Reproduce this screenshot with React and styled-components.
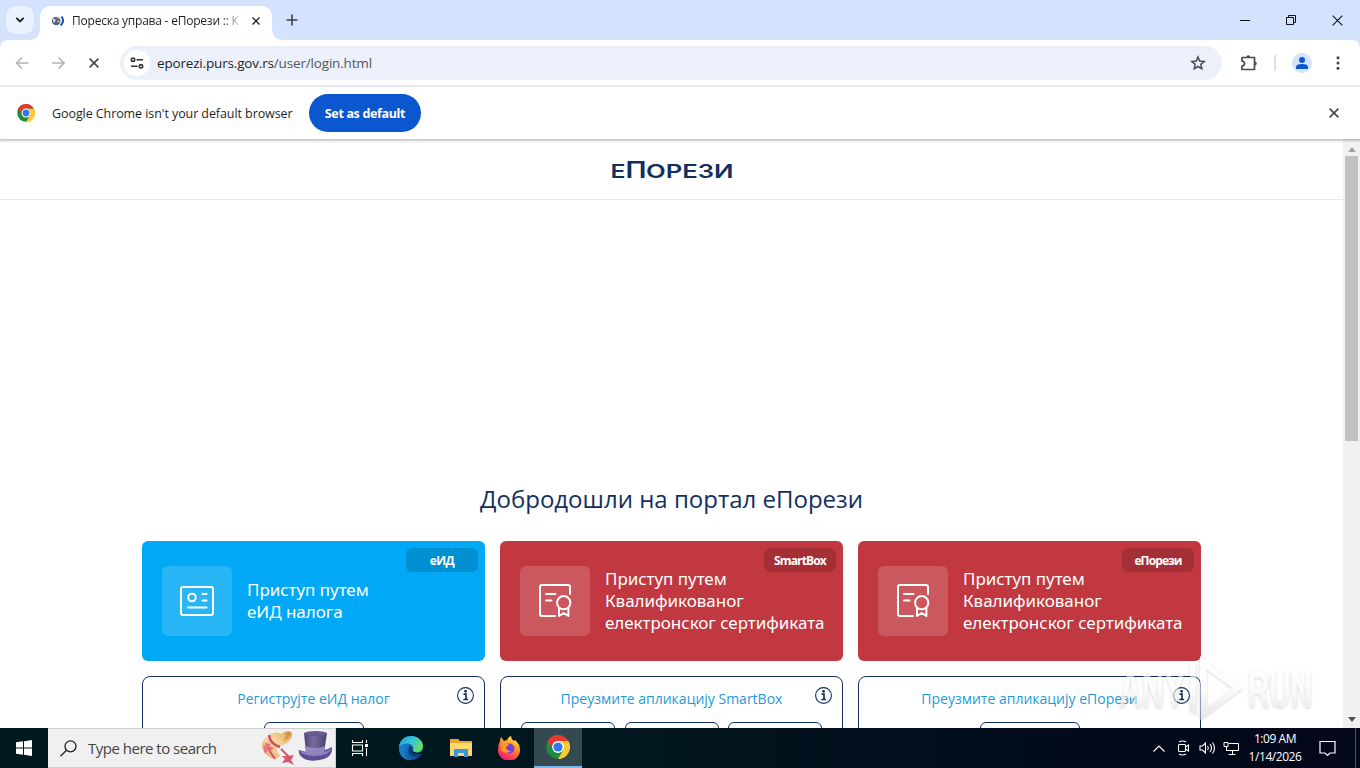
import React from "react";
import styled, { createGlobalStyle } from "styled-components";

const navy = "#12305f";

const GlobalStyle = createGlobalStyle`
  *, *::before, *::after { box-sizing: border-box; }
  html, body { margin: 0; padding: 0; overflow: hidden; }
  body { font-family: "Open Sans", "Noto Sans", sans-serif; color: #1f1f1f; }
  svg { display: block; flex: none; }
`;

const Screen = styled.div`
  position: relative;
  width: 1360px;
  height: 768px;
  display: flex;
  flex-direction: column;
  overflow: hidden;
  background: #fff;
`;

/* ---------- browser chrome ---------- */

const TabStrip = styled.div`
  display: flex;
  height: 40px;
  padding-left: 6px;
  background: #d3e3fd;
`;

const TabSearch = styled.div`
  width: 28px;
  height: 28px;
  margin: 6px 6px 0 0;
  border-radius: 10px;
  background: #e9f1fe;
  display: grid;
  place-items: center;
`;

const Tab = styled.div`
  position: relative;
  width: 232px;
  height: 34px;
  margin-top: 6px;
  padding: 0 10px 5px 11px;
  display: flex;
  align-items: center;
  background: #fff;
  border-radius: 10px 10px 0 0;
  &::before, &::after {
    content: "";
    position: absolute;
    bottom: 0;
    width: 10px;
    height: 10px;
  }
  &::before { left: -10px; background: radial-gradient(circle at 0 0, transparent 9.5px, #fff 10px); }
  &::after { right: -10px; background: radial-gradient(circle at 100% 0, transparent 9.5px, #fff 10px); }
`;

const TabTitle = styled.span`
  flex: none;
  width: 168px;
  margin-left: 7px;
  margin-right: 12px;
  white-space: nowrap;
  font-size: 12px;
  line-height: 18px;
  letter-spacing: -0.22px;
  mask-image: linear-gradient(to right, #000 150px, transparent 172px);
`;

const NewTab = styled.div`
  margin: 14px 0 0 14px;
`;

const WindowControls = styled.div`
  display: flex;
  margin-left: auto;
`;

const WindowButton = styled.div`
  width: 46px;
  height: 40px;
  display: grid;
  place-items: center;
`;

const ToolbarBack = styled.div`
  background: #d3e3fd;
`;

const Toolbar = styled.div`
  display: flex;
  align-items: center;
  height: 46px;
  padding: 0 13px;
  background: #fff;
  border-radius: 8px 8px 0 0;
`;

const ToolButton = styled.div`
  flex: none;
  width: 18px;
  display: flex;
  justify-content: center;
  margin-left: ${(p) => p.$before || 0}px;
  margin-right: ${(p) => p.$after || 0}px;
`;

const AddressBar = styled.div`
  flex: none;
  display: flex;
  align-items: center;
  width: 1102px;
  height: 34px;
  padding: 0 16px 0 4px;
  border-radius: 17px;
  background: #ecf0fa;
`;

const SiteInfo = styled.div`
  width: 26px;
  height: 26px;
  border-radius: 50%;
  background: #fff;
  display: grid;
  place-items: center;
`;

const Url = styled.span`
  flex: 1;
  margin-left: 7px;
  font-size: 13.5px;
  line-height: 20px;
  letter-spacing: -0.17px;
  color: #1f1f1f;
  em { font-style: normal; color: #53565b; }
`;

const Divider = styled.div`
  width: 2px;
  height: 16px;
  background: #dbe2ee;
`;

const Avatar = styled.div`
  flex: none;
  width: 20px;
  height: 20px;
  margin: 0 24px 0 16px;
  border-radius: 50%;
  background: #d3e3fd;
  display: grid;
  place-items: center;
`;

const InfoBar = styled.div`
  position: relative;
  z-index: 1;
  display: flex;
  align-items: center;
  height: 53px;
  padding: 0 21px 0 17px;
  border-top: 1px solid #e1e5ea;
  background: #fff;
  box-shadow: 0 1px 2px 1px rgba(0, 0, 0, 0.22);
`;

const InfoText = styled.span`
  width: 257px;
  margin-left: 17px;
  white-space: nowrap;
  font-size: 12.5px;
  letter-spacing: -0.08px;
`;

const DefaultButton = styled.div`
  width: 112px;
  height: 38px;
  margin-right: auto;
  border-radius: 19px;
  background: #0b57d0;
  color: #fff;
  font-size: 12.5px;
  font-weight: 700;
  line-height: 39px;
  text-align: center;
  white-space: nowrap;
  letter-spacing: -0.34px;
`;

/* ---------- page ---------- */

const Viewport = styled.div`
  display: flex;
  height: 589px;
`;

const Page = styled.main`
  flex: 1;
  display: flex;
  flex-direction: column;
  align-items: center;
  overflow: hidden;
`;

const SiteHeader = styled.header`
  flex: none;
  width: 100%;
  height: 61px;
  padding-top: 20px;
  display: flex;
  justify-content: center;
  border-bottom: 1px solid #e7e9eb;
`;

const Welcome = styled.h1`
  flex: none;
  margin: 281px 0 0;
  height: 60px;
  font-size: 24px;
  font-weight: 400;
  line-height: 36px;
  white-space: nowrap;
  color: ${navy};
`;

const CardGrid = styled.div`
  flex: none;
  display: grid;
  grid-template-columns: repeat(3, 343px);
  gap: 15px;
`;

const LoginCard = styled.div`
  position: relative;
  display: flex;
  align-items: center;
  height: 120px;
  padding-left: 20px;
  border-radius: 6px;
  background: ${(p) => p.$color};
  color: #fff;
`;

const IconTile = styled.div`
  width: 70px;
  height: 70px;
  border-radius: 6px;
  background: rgba(255, 255, 255, 0.16);
  display: grid;
  place-items: center;
`;

const CardText = styled.div`
  margin-left: 15px;
  font-family: "Noto Sans", sans-serif;
  font-size: 17px;
  line-height: 22px;
  white-space: pre;
  letter-spacing: -0.03px;
`;

const CardBadge = styled.div`
  position: absolute;
  top: 7px;
  right: 7px;
  width: 72px;
  height: 24px;
  border-radius: 6px;
  background: rgba(0, 0, 0, 0.15);
  font-size: 12px;
  font-weight: 700;
  line-height: 25px;
  text-align: center;
  white-space: nowrap;
  letter-spacing: ${(p) => p.$spacing};
`;

const ActionCard = styled.div`
  position: relative;
  height: 90px;
  border: 1px solid ${navy};
  border-radius: 8px;
`;

const ActionTitle = styled.div`
  margin-top: 12px;
  height: 33px;
  text-align: center;
  font-size: 14px;
  line-height: 20px;
  white-space: nowrap;
  color: #1d9bd8;
`;

const ActionButtons = styled.div`
  display: flex;
  justify-content: center;
  gap: 9.5px;
`;

const ActionButton = styled.div`
  width: ${(p) => p.$width}px;
  height: 36px;
  border: 1px solid ${navy};
  border-radius: 6px;
`;

const InfoBadge = styled.div`
  position: absolute;
  top: 10px;
  right: 10px;
`;

const Scrollbar = styled.div`
  width: 17px;
  display: flex;
  flex-direction: column;
  align-items: center;
  justify-content: space-between;
  padding: 8px 0 6px;
  background: #f1f1f1;
`;

const Thumb = styled.div`
  width: 13px;
  height: 285px;
  margin: 4px 0 auto;
  background: #c1c1c1;
`;

const Watermark = styled.div`
  position: absolute;
  left: 1114px;
  top: 650px;
`;

/* ---------- taskbar ---------- */

const Taskbar = styled.footer`
  display: flex;
  height: 40px;
  background: linear-gradient(to right, #011a21, #01171f 45%, #020a1a 80%, #020819);
  color: #fff;
`;

const TaskItem = styled.div`
  width: ${(p) => p.$width}px;
  display: grid;
  place-items: center;
  background: ${(p) => (p.$active ? "#344950" : "transparent")};
  border-bottom: ${(p) => (p.$active ? "2px solid #76b9ed" : "0")};
`;

const SearchBox = styled.div`
  width: 288px;
  display: flex;
  align-items: center;
  padding: 0 3px 0 12px;
  border: 1px solid #cfcfcf;
  border-left: 0;
  background: #f0f0f0;
  color: #454545;
`;

const SearchText = styled.span`
  flex: 1;
  margin-left: 11px;
  font-size: 15px;
  white-space: nowrap;
  letter-spacing: -0.5px;
`;

const Tray = styled.div`
  display: flex;
  align-items: center;
  margin-left: auto;
`;

const TrayIcon = styled.div`
  width: 24px;
  display: grid;
  place-items: center;
`;

const Clock = styled.div`
  width: 64px;
  text-align: center;
  font-size: 12px;
  line-height: 18px;
  white-space: nowrap;
  letter-spacing: -0.45px;
`;

const Notifications = styled.div`
  width: 40px;
  display: grid;
  place-items: center;
`;

const ShowDesktop = styled.div`
  width: 5px;
  height: 40px;
  margin-left: 8px;
  border-left: 1px solid #4d5461;
`;

/* ---------- drawings ---------- */

const Cross = ({ size = 10, width = 1.6, color = "#3f4246" }) => (
  <svg width={size} height={size} viewBox="0 0 10 10" stroke={color} strokeWidth={width} fill="none">
    <path d="M.6.6 9.4 9.4M9.4.6.6 9.4" />
  </svg>
);

const Arrow = ({ flip }) => (
  <svg width="14" height="14" viewBox="0 0 14 14" fill="none" stroke="#b2b4b8" strokeWidth="1.6">
    <path d={flip ? "M1 7h11.5M7.5 1.5 13 7l-5.5 5.5" : "M13.5 7H2M7 1.5 1.5 7 7 12.5"} />
  </svg>
);

const Favicon = () => (
  <svg width="14" height="14" viewBox="0 0 14 14">
    <circle cx="5.200" cy="7" r="4.300" fill="#5b6470" />
    <path d="M2 5q3-1 2.500 1.500T2.500 8.500M5 3.500q2 1.500 3.500.5M6.500 6.500q2 0 2 2l-2-.5z" fill="#dce5eb" />
    <path d="M10.500 2.500q3.500 4.500-.8 9" fill="none" stroke="#1549b8" strokeWidth="2" />
  </svg>
);

const ChromeLogo = ({ size }) => (
  <svg width={size} height={size} viewBox="0 0 48 48">
    <circle cx="24" cy="24" r="23.5" fill="#1e8e3e" />
    <path d="M24 12h20.8A24 24 0 0 1 24 48l10.4-18z" fill="#fcc934" />
    <path d="M3.2 12 13.6 30A12 12 0 0 1 24 12h20.8A24 24 0 0 0 3.2 12z" fill="#e33b2e" />
    <circle cx="24" cy="24" r="11.8" fill="#fff" />
    <circle cx="24" cy="24" r="9.2" fill="#3179ed" />
  </svg>
);

const TuneIcon = () => (
  <svg width="14" height="12" viewBox="0 0 14 12" fill="none" stroke="#303235" strokeWidth="1.6">
    <circle cx="3" cy="2.7" r="1.7" />
    <path d="M6.5 2.7H13M1 9.3h6.5" />
    <circle cx="11" cy="9.3" r="1.7" />
  </svg>
);

const StarIcon = () => (
  <svg width="16" height="16" viewBox="0 0 16 16" fill="none" stroke="#474a4f" strokeWidth="1.5">
    <path d="m8 2 1.700 4.100 4.500.4-3.400 2.900 1 4.400L8 11.500l-3.800 2.300 1-4.400-3.400-2.900 4.500-.4z" />
  </svg>
);

const PuzzleIcon = () => (
  <svg width="18" height="18" viewBox="0 0 18 18" fill="none" stroke="#474a4f" strokeWidth="1.7" strokeLinejoin="round">
    <path d="M2 3.500h12.500v12H2V12q2.600-.3 2.600-2.400T2 7z" />
    <path d="M6.500 3a1.800 1.800 0 0 1 3.600 0zM15 7.700a1.800 1.800 0 0 1 0 3.600z" fill="#474a4f" stroke="none" />
  </svg>
);

const PersonIcon = () => (
  <svg width="14" height="14" viewBox="0 0 14 14" fill="#0b57d0">
    <circle cx="7" cy="4" r="3" />
    <path d="M1 13v-2q0-3 6-3t6 3v2z" />
  </svg>
);

const Logo = () => (
  <svg width="124" height="30" viewBox="0 0 124 30" overflow="visible" fill={navy} fontFamily="Inter, sans-serif" fontWeight="600">
    <text x="0.5" y="18.5" fontSize="19" textLength="15" lengthAdjust="spacingAndGlyphs">Е</text>
    <text x="15.5" y="18.5" fontSize="23" textLength="21" lengthAdjust="spacingAndGlyphs">П</text>
    <text x="36" y="18.5" fontSize="19" textLength="87.5" lengthAdjust="spacingAndGlyphs">ОРЕЗИ</text>
  </svg>
);

const IdIcon = () => (
  <svg width="36" height="32" viewBox="0 0 36 32" fill="none" stroke="#fff" strokeWidth="2" strokeLinecap="round">
    <rect x="2" y="2" width="32" height="28" rx="2" />
    <circle cx="13" cy="12.500" r="3.800" />
    <path d="M23.500 9h4M23.500 15.500h4M9 22.500h18.500" />
  </svg>
);

const CertificateIcon = () => (
  <svg width="34" height="34" viewBox="0 0 34 34" fill="none" stroke="#fff" strokeWidth="2" strokeLinecap="round" strokeLinejoin="round">
    <path d="M17 32H4q-2 0-2-2V3q0-2 2-2h26q2 0 2 2v7" />
    <path d="M8 10h9.500M8 16.500h5.500" />
    <circle cx="25.700" cy="18.700" r="6.600" />
    <path d="M21 24v8l4.700-3 4.700 3V24" />
  </svg>
);

const InfoIcon = () => (
  <svg width="17" height="17" viewBox="0 0 17 17" fill="none" stroke={navy}>
    <circle cx="8.500" cy="8.500" r="7.900" strokeWidth="1.100" />
    <path d="M6.500 7.200h2.500v5M6.300 12.500h4.700" strokeWidth="1.700" />
    <circle cx="8.600" cy="4.300" r="1.400" fill={navy} stroke="none" />
  </svg>
);

const HatsArt = () => (
  <svg width="71" height="36" viewBox="0 0 71 36">
    <defs>
      <linearGradient id="straw" x1="0" y1="1" x2="1" y2="0">
        <stop stopColor="#e0a662" />
        <stop offset=".5" stopColor="#f8d9a0" />
        <stop offset="1" stopColor="#e0a558" />
      </linearGradient>
      <linearGradient id="felt" x1="0" x2="1">
        <stop stopColor="#4d4272" />
        <stop offset=".4" stopColor="#796ba3" />
        <stop offset="1" stopColor="#4a3f70" />
      </linearGradient>
    </defs>
    <path d="M9 4.500Q14 1 20 4q5-4 10-2 3 3-1 8-5 6-12 6-3 4 2 9-1 5-9 3Q0 22 1 14 3 7 9 4.500z" fill="url(#straw)" />
    <path d="M24 3q5-3 6 0-1 6-8 8 4-4 2-8z" fill="#c98941" opacity=".7" />
    <path d="M8 5q1 9 11 12" stroke="#c9506a" strokeWidth="2.500" fill="none" />
    <path d="M6 17 14 29M20 19l8 8" stroke="#dc526b" strokeWidth="2" />
    <path d="m2 15 6 3-4 6zM10 14l-6-1 1 7zM8 16l5 2-5 4z" fill="#e56f80" />
    <path d="m27 26 6-1-3 5 3 5-6-3-6 1 3-4-3-3z" fill="#d9546d" />
    <path d="M38 20q16 6 33-3 1 9-8 12-14 4-21-1-5-3-4-8z" fill="#5d4e96" />
    <path d="M38 20q17 9 33-2-4 8-17 8-12 0-16-6z" fill="#8f81c4" />
    <path d="m43 3 2 20q9 4 18 0l3-20z" fill="url(#felt)" />
    <path d="m44.500 16 .5 7q9 4 18 0l1-7q-10 4-19.500 0z" fill="#9386bf" />
    <ellipse cx="54.500" cy="3.500" rx="11.500" ry="2.500" fill="#665990" />
  </svg>
);

const EdgeLogo = () => (
  <svg width="26" height="26" viewBox="0 0 26 26">
    <defs>
      <linearGradient id="edgeTop" x1="0" y1="0" x2="1" y2=".5">
        <stop stopColor="#219bd9" />
        <stop offset=".55" stopColor="#36c5d3" />
        <stop offset="1" stopColor="#65dd62" />
      </linearGradient>
      <linearGradient id="edgeBody" x1="0" y1="0" x2="1" y2="1">
        <stop stopColor="#1785d7" />
        <stop offset="1" stopColor="#124b96" />
      </linearGradient>
    </defs>
    <circle cx="13" cy="13" r="12" fill="url(#edgeBody)" />
    <path d="M1 12C2 4 8 1 13 1c7 0 12 5 12 10 0 4-3 6.500-7 6.500-3 0-4-1-3-3 2-5-7-9-14-2.500z" fill="url(#edgeTop)" />
    <path d="M12 11c-4 4-1 11 6 11 3 0 5-1.500 6-3.500-4 1.500-11 1-9.500-4 .6-2-1-4-2.500-3.500z" fill="#0d3f80" />
    <path d="M14.500 14.500c-1 3 1 4.500 5 4.500h5.500v-3q-2 2-6 1.700-4-.2-4.500-3.200z" fill="#031820" />
    <path d="M8 12c-4 6 0 13 6 13-8 1-13-5-13-12 2-4 6-4 9-3z" fill="#197ec9" />
  </svg>
);

const FolderLogo = () => (
  <svg width="24" height="20" viewBox="0 0 24 20">
    <path d="M1 1h8l2 2h12v15H1z" fill="#e8a92d" />
    <path d="M1 5h22v13H1z" fill="#ffd86d" />
    <path d="M5 19v-7q0-1 1-1h12q1 0 1 1v7h-4v-4H9v4z" fill="#399ad7" />
  </svg>
);

const FirefoxLogo = () => (
  <svg width="24" height="24" viewBox="0 0 24 24">
    <defs>
      <linearGradient id="fox" x1=".8" y1="0" x2=".3" y2="1">
        <stop stopColor="#fff044" />
        <stop offset=".4" stopColor="#ff9728" />
        <stop offset=".75" stopColor="#ff4055" />
        <stop offset="1" stopColor="#e31587" />
      </linearGradient>
    </defs>
    <path d="M3 5q0-2 1-4l3 4 3-1q1-3 4-4 0 3 3 5l1-1q5 4 5 10a11 11 0 0 1-22 0q0-5 2-9z" fill="url(#fox)" />
    <circle cx="12.500" cy="12.500" r="5" fill="#7543d3" />
    <path d="M5 7q5-1 7 2l-3 2q0 4 5 4-6 4-10-1z" fill="#ff9a25" />
  </svg>
);

const TaskViewIcon = () => (
  <svg width="18" height="16" viewBox="0 0 18 16" fill="none" stroke="#fff" strokeWidth="1.100">
    <path d="M1.500 0v2.500h10V0M1.500 16v-2.500h10V16M1.500 5h10v6h-10zM15.500 0v3M15.500 8v8" />
    <path d="M14 4h3v3h-3z" fill="#fff" stroke="none" />
  </svg>
);

const WatermarkArt = () => (
  <svg width="210" height="78" viewBox="0 0 210 78" overflow="visible">
    <defs>
      <filter id="soft" x="-10%" y="-10%" width="120%" height="130%">
        <feDropShadow dx="0" dy="1" stdDeviation="1.800" floodColor="#000" floodOpacity=".32" />
      </filter>
      <linearGradient id="sheen" gradientUnits="userSpaceOnUse" x1="0" y1="8" x2="0" y2="70">
        <stop stopColor="#fff" />
        <stop offset=".5" stopColor="#fafafa" />
        <stop offset="1" stopColor="#d2d2d2" />
      </linearGradient>
    </defs>
    <g filter="url(#soft)" opacity=".58" fill="url(#sheen)" fontFamily="Liberation Sans, sans-serif" fontSize="50" fontWeight="700">
      <text x="5" y="57" textLength="66" lengthAdjust="spacingAndGlyphs">ANY</text>
      <text x="134" y="57" textLength="64" lengthAdjust="spacingAndGlyphs">RUN</text>
      <path d="M86 6v64l43-32zM92.500 19l26 19-26 20z" fillRule="evenodd" />
      <path d="M76 17q2-3 6-6v54q-4-3-6-6z" />
    </g>
  </svg>
);

const ACCESS = [
  { badge: "еИД", spacing: "-0.6px", color: "#00a8f6", text: "Приступ путем\nеИД налога", icon: <IdIcon /> },
  { badge: "SmartBox", spacing: "-0.85px", color: "#c13840", text: "Приступ путем\nКвалификованог\nелектронског сертификата", icon: <CertificateIcon /> },
  { badge: "еПорези", spacing: "-0.9px", color: "#c13840", text: "Приступ путем\nКвалификованог\nелектронског сертификата", icon: <CertificateIcon /> },
];

const ACTIONS = [
  { title: "Региструјте еИД налог", buttons: [100] },
  { title: "Преузмите апликацију SmartBox", buttons: [94, 94, 94] },
  { title: "Преузмите апликацију еПорези", buttons: [100] },
];

export default function App() {
  return (
    <Screen>
      <GlobalStyle />
      <TabStrip>
        <TabSearch>
          <svg width="10" height="6" viewBox="0 0 10 6" fill="none" stroke="#1f1f1f" strokeWidth="1.8"><path d="m1.300.8 3.700 3.700L8.700.8" /></svg>
        </TabSearch>
        <Tab>
          <Favicon />
          <TabTitle>Пореска управа - еПорези :: К</TabTitle>
          <Cross size={8} width={1.8} color="#27292c" />
        </Tab>
        <NewTab>
          <svg width="12" height="12" viewBox="0 0 12 12" stroke="#3f4246" strokeWidth="1.600"><path d="M6 .5v11M.5 6h11" /></svg>
        </NewTab>
        <WindowControls>
          <WindowButton><svg width="10" height="10" viewBox="0 0 10 10" stroke="#111"><path d="M0 5.500h10" /></svg></WindowButton>
          <WindowButton><svg width="10" height="10" viewBox="0 0 10 10" fill="none" stroke="#111"><path d="M.5 2.500h7v7h-7zM2.500 2.500v-2h7v7h-2" /></svg></WindowButton>
          <WindowButton><Cross size={11} width={1} color="#111" /></WindowButton>
        </WindowControls>
      </TabStrip>
      <ToolbarBack>
        <Toolbar>
          <ToolButton $after={18}><Arrow /></ToolButton>
          <ToolButton $after={18}><Arrow flip /></ToolButton>
          <ToolButton $after={17}><Cross size={10} width={1.5} /></ToolButton>
          <AddressBar>
            <SiteInfo><TuneIcon /></SiteInfo>
            <Url>eporezi.purs.gov.rs<em>/user/login.html</em></Url>
            <StarIcon />
          </AddressBar>
          <ToolButton $before={18} $after={16}><PuzzleIcon /></ToolButton>
          <Divider />
          <Avatar><PersonIcon /></Avatar>
          <svg width="4" height="14" viewBox="0 0 4 14" fill="#3f4246"><circle cx="2" cy="1.700" r="1.500" /><circle cx="2" cy="7" r="1.500" /><circle cx="2" cy="12.300" r="1.500" /></svg>
        </Toolbar>
      </ToolbarBack>
      <InfoBar>
        <ChromeLogo size={18} />
        <InfoText>Google Chrome isn't your default browser</InfoText>
        <DefaultButton>Set as default</DefaultButton>
        <Cross size={10} width={1.5} />
      </InfoBar>

      <Viewport>
        <Page>
          <SiteHeader><Logo /></SiteHeader>
          <Welcome>Добродошли на портал еПорези</Welcome>
          <CardGrid>
            {ACCESS.map((c) => (
              <LoginCard key={c.badge} $color={c.color}>
                <IconTile>{c.icon}</IconTile>
                <CardText>{c.text}</CardText>
                <CardBadge $spacing={c.spacing}>{c.badge}</CardBadge>
              </LoginCard>
            ))}
            {ACTIONS.map((a) => (
              <ActionCard key={a.title}>
                <ActionTitle>{a.title}</ActionTitle>
                <ActionButtons>
                  {a.buttons.map((w, i) => <ActionButton key={i} $width={w} />)}
                </ActionButtons>
                <InfoBadge><InfoIcon /></InfoBadge>
              </ActionCard>
            ))}
          </CardGrid>
        </Page>
        <Scrollbar>
          <svg width="8" height="5" viewBox="0 0 8 5" fill="#a3a3a3"><path d="M4 0 8 5H0z" /></svg>
          <Thumb />
          <svg width="8" height="5" viewBox="0 0 8 5" fill="#505050"><path d="M4 5 8 0H0z" /></svg>
        </Scrollbar>
      </Viewport>

      <Taskbar>
        <TaskItem $width={48}>
          <svg width="16" height="16" viewBox="0 0 16 16" fill="#fff"><path d="m0 2.300 7-1v6.200H0zM8 1.200 16 0v7.500H8zM0 8.500h7v6.200l-7-1zM8 8.500h8V16l-8-1.200z" /></svg>
        </TaskItem>
        <SearchBox>
          <svg width="17" height="17" viewBox="0 0 17 17" fill="none" stroke="#222" strokeWidth="1.300"><circle cx="10.500" cy="6.300" r="5.500" /><path d="m6.500 10.300-6 6" /></svg>
          <SearchText>Type here to search</SearchText>
          <HatsArt />
        </SearchBox>
        <TaskItem $width={48}><TaskViewIcon /></TaskItem>
        <TaskItem $width={54}><EdgeLogo /></TaskItem>
        <TaskItem $width={46}><FolderLogo /></TaskItem>
        <TaskItem $width={50}><FirefoxLogo /></TaskItem>
        <TaskItem $width={48} $active><ChromeLogo size={24} /></TaskItem>
        <Tray>
          <TrayIcon><svg width="12" height="7" viewBox="0 0 12 7" fill="none" stroke="#fff" strokeWidth="1.200"><path d="m.5 6.500 5.500-5.500 5.500 5.500" /></svg></TrayIcon>
          <TrayIcon><svg width="14" height="16" viewBox="0 0 14 16" fill="none" stroke="#fff" strokeWidth="1.100"><rect x="2.500" y="4.500" width="7" height="7" rx="1" /><path d="m9.500 7 3-2v6l-3-2M3 2q3.500-2 7 0M3 14q3.500 2 7 0" /></svg></TrayIcon>
          <TrayIcon><svg width="17" height="14" viewBox="0 0 17 14" fill="none" stroke="#fff" strokeWidth="1.100"><path d="M1 5h2.500L6.500 2v10l-3-3H1zM8.500 5q1.500 2 0 4M11 3q3 4 0 8M13.500 1.500q4 5.500 0 11" /></svg></TrayIcon>
          <TrayIcon><svg width="17" height="15" viewBox="0 0 17 15" fill="none" stroke="#fff"><path d="M5.500 2.500h10v7h-12V6M1 1.500h4v4H1zM3.500 5.500v4M9.500 9.500v4M5.500 13.500h7" /></svg></TrayIcon>
          <Clock>1:09 AM<br />1/14/2026</Clock>
          <Notifications><svg width="17" height="17" viewBox="0 0 17 17" fill="none" stroke="#fff" strokeWidth="1.200"><path d="M1 1.500h15v11.500h-5l-2.500 2.500L6 13H1z" /></svg></Notifications>
          <ShowDesktop />
        </Tray>
      </Taskbar>
      <Watermark><WatermarkArt /></Watermark>
    </Screen>
  );
}
